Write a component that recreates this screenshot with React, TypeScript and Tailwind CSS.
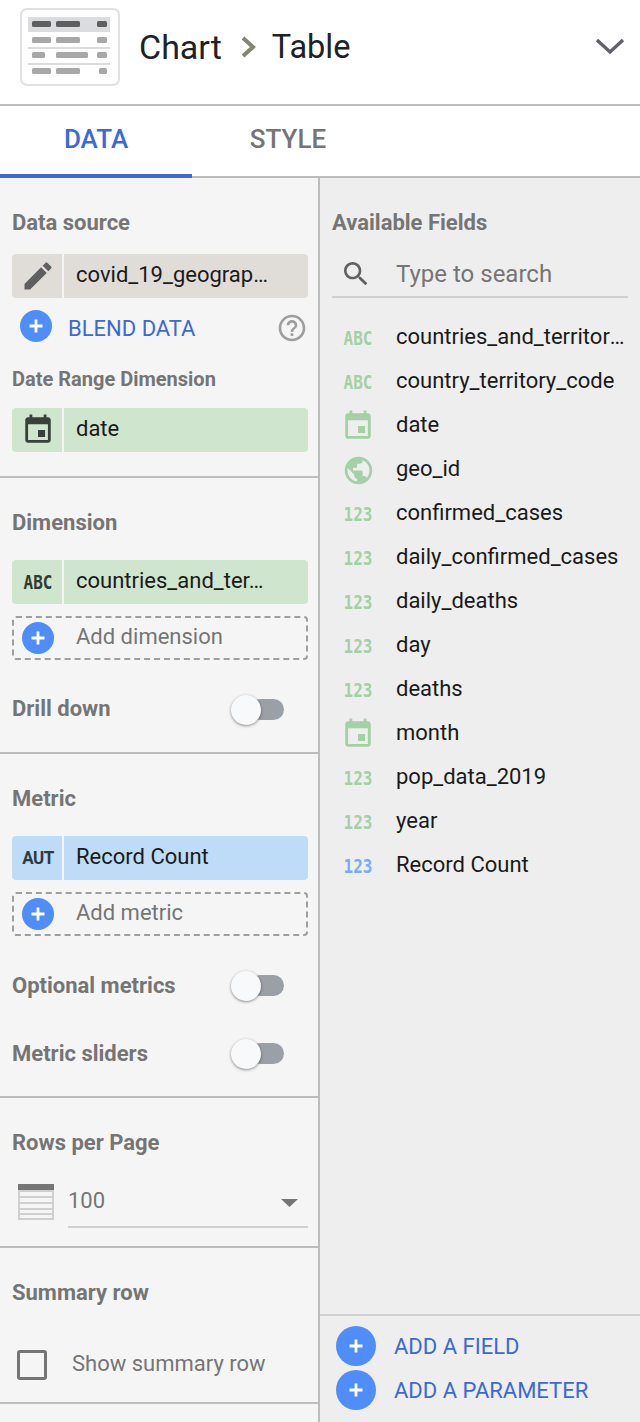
import type { ReactNode } from "react";

const EVENT = "M17 12h-5v5h5v-5zM16 1v2H8V1H6v2H5c-1.11 0-1.99.9-1.99 2L3 19c0 1.1.89 2 2 2h14c1.1 0 2-.9 2-2V5c0-1.1-.9-2-2-2h-1V1h-2zm3 18H5V8h14v11z";
const GLOBE = "M12 2C6.48 2 2 6.48 2 12s4.48 10 10 10 10-4.48 10-10S17.52 2 12 2zm-1 17.93c-3.95-.49-7-3.85-7-7.93 0-.62.08-1.21.21-1.79L9 15v1c0 1.1.9 2 2 2v1.93zm6.9-2.54c-.26-.81-1-1.39-1.9-1.39h-1v-3c0-.55-.45-1-1-1H8v-2h2c.55 0 1-.45 1-1V7h2c1.1 0 2-.9 2-2v-.41c2.93 1.19 5 4.06 5 7.41 0 2.08-.8 3.97-2.1 5.39z";
const EDIT = "M3 17.25V21h3.75L17.81 9.94l-3.75-3.75L3 17.25zM20.71 7.04c.39-.39.39-1.02 0-1.41l-2.34-2.34c-.39-.39-1.02-.39-1.41 0l-1.83 1.83 3.75 3.75 1.83-1.83z";
const HELP = "M11 18h2v-2h-2v2zm1-16C6.48 2 2 6.48 2 12s4.48 10 10 10 10-4.48 10-10S17.52 2 12 2zm0 18c-4.41 0-8-3.59-8-8s3.59-8 8-8 8 3.59 8 8-3.59 8-8 8zm0-14c-2.21 0-4 1.79-4 4h2c0-1.1.9-2 2-2s2 .9 2 2c0 2-3 1.75-3 5h2c0-2.25 3-2.5 3-5 0-2.21-1.79-4-4-4z";
const SEARCH = "M15.5 14h-.79l-.28-.27C15.41 12.59 16 11.11 16 9.5 16 5.91 13.09 3 9.5 3S3 5.91 3 9.5 5.91 16 9.5 16c1.61 0 3.09-.59 4.23-1.57l.27.28v.79l5 4.99L20.49 19l-4.99-5zm-6 0C7.01 14 5 11.99 5 9.5S7.01 5 9.5 5 14 7.01 14 9.5 11.99 14 9.5 14z";

function Mat({ d, size, color }: { d: string; size: number; color: string }) {
  return (
    <svg width={size} height={size} viewBox="0 0 24 24" fill={color}>
      <path d={d} />
    </svg>
  );
}

function Plus({ size }: { size: number }) {
  const arm = 6.5;
  const c = size / 2;
  return (
    <svg width={size} height={size} viewBox={`0 0 ${size} ${size}`} className="shrink-0">
      <circle cx={c} cy={c} r={c} fill="#4f8df9" />
      <path d={`M${c - arm} ${c}H${c + arm}M${c} ${c - arm}V${c + arm}`} stroke="#fff" strokeWidth="2.8" />
    </svg>
  );
}

function Logo() {
  const bar = (x: number, y: number, w: number, fill: string) => (
    <rect x={x} y={y} width={w} height={6} rx={1.5} fill={fill} />
  );
  return (
    <svg width={100} height={78} viewBox="0 0 100 78" className="shrink-0">
      <rect x={1} y={1} width={98} height={76} rx={6} fill="#fff" stroke="#e0e1e4" strokeWidth={2} />
      <rect x={8} y={9} width={82} height={15} fill="#dadce0" />
      {bar(12, 13, 19, "#5f5f5f")}
      {bar(36, 13, 24, "#5f5f5f")}
      {bar(77, 13, 10, "#5f5f5f")}
      {bar(12, 29, 19, "#a8a8a8")}
      {bar(36, 29, 24, "#a8a8a8")}
      {bar(77, 29, 10, "#a8a8a8")}
      <rect x={8} y={39} width={82} height={2} fill="#dadce0" />
      {bar(12, 44, 13, "#a8a8a8")}
      {bar(36, 44, 32, "#a8a8a8")}
      {bar(77, 44, 10, "#a8a8a8")}
      <rect x={8} y={55} width={82} height={2} fill="#dadce0" />
      {bar(12, 60, 19, "#a8a8a8")}
      {bar(36, 60, 24, "#a8a8a8")}
      {bar(79, 60, 8, "#a8a8a8")}
    </svg>
  );
}

function Label({ children, className = "" }: { children: ReactNode; className?: string }) {
  return <div className={`font-bold text-[#757575] ${className}`}>{children}</div>;
}

function Pill({ bg, icon, text }: { bg: string; icon: ReactNode; text: string }) {
  return (
    <div className={`mx-3 h-[44px] w-[296px] flex rounded-[4px] overflow-hidden ${bg}`}>
      <div className="w-[48px] pl-[2px] flex items-center justify-center border-r-2 border-[#f5f5f5] box-content">{icon}</div>
      <div className="flex-1 pl-3 text-[22px] leading-[42px] text-[#1a1a1a] truncate">{text}</div>
    </div>
  );
}

function TypeTag({ text, color }: { text: string; color: string }) {
  return (
    <span
      className="inline-block mt-[2px] font-bold text-[16px] leading-none scale-y-125"
      style={{ color, fontFamily: '"DejaVu Sans Mono", monospace' }}
    >
      {text}
    </span>
  );
}

function AddBox({ text }: { text: string }) {
  return (
    <div className="mx-3 mt-3 h-[44px] w-[296px] flex items-center pl-[8px] rounded-[4px] border-2 border-dashed border-[#9e9e9e]">
      <Plus size={32} />
      <span className="ml-[22px] pb-[4px] text-[22px] text-[#757575]">{text}</span>
    </div>
  );
}

function Toggle() {
  return (
    <div className="relative w-[34px] h-[21px] rounded-full bg-[#9aa0a6] mr-[34px]">
      <div className="absolute left-[-19px] top-[-4px] w-[30px] h-[30px] rounded-full bg-[#f8f9fa] shadow-[0_1px_3px_rgba(0,0,0,0.45)]" />
    </div>
  );
}

function ToggleRow({ label, className = "", labelClass = "" }: { label: string; className?: string; labelClass?: string }) {
  return (
    <div className={`h-[24px] pl-3 flex items-center justify-between ${className}`}>
      <Label className={`text-[22px] leading-[24px] ${labelClass}`}>{label}</Label>
      <Toggle />
    </div>
  );
}

const fields = [
  { name: "countries_and_territories", kind: "abc" },
  { name: "country_territory_code", kind: "abc" },
  { name: "date", kind: "date" },
  { name: "geo_id", kind: "geo" },
  { name: "confirmed_cases", kind: "num" },
  { name: "daily_confirmed_cases", kind: "num" },
  { name: "daily_deaths", kind: "num" },
  { name: "day", kind: "num" },
  { name: "deaths", kind: "num" },
  { name: "month", kind: "date" },
  { name: "pop_data_2019", kind: "num" },
  { name: "year", kind: "num" },
  { name: "Record Count", kind: "metric" },
];

function FieldIcon({ kind }: { kind: string }) {
  const green = "#a5cfa6";
  if (kind === "abc") return <TypeTag text="ABC" color={green} />;
  if (kind === "date") return <Mat d={EVENT} size={34} color={green} />;
  if (kind === "geo") return <Mat d={GLOBE} size={33} color={green} />;
  return <TypeTag text="123" color={kind === "metric" ? "#7baaf7" : green} />;
}

function TableIcon() {
  return (
    <svg width={36} height={36} viewBox="0 0 36 36" className="shrink-0">
      <rect width={36} height={36} fill="#cfcfcf" />
      <rect width={36} height={6} fill="#757575" />
      <rect x={2} y={8} width={32} height={4} fill="#f5f5f5" />
      <rect x={2} y={14} width={32} height={4} fill="#f5f5f5" />
      <rect x={2} y={20} width={32} height={4} fill="#f5f5f5" />
      <rect x={2} y={26} width={32} height={3} fill="#f5f5f5" />
      <rect x={2} y={31} width={32} height={3} fill="#f5f5f5" />
    </svg>
  );
}

export default function App() {
  return (
    <div className="w-[640px] h-[1422px] overflow-hidden flex flex-col bg-white font-['Roboto',sans-serif]">
      <header className="h-[106px] shrink-0 flex items-center pl-5 pr-[15px] border-b-2 border-[#bdbdbd]">
        <div className="flex items-center w-full -mt-[10px]">
          <Logo />
          <span className="ml-[19px] text-[34px] text-[#202124]">Chart</span>
          <svg width={16} height={22} viewBox="0 0 16 22" className="ml-[19px]">
            <path d="M2 2l10 9-10 9" fill="none" stroke="#80866f" strokeWidth="4" />
          </svg>
          <span className="ml-[15px] text-[32.5px] text-[#202124]">Table</span>
          <svg width={30} height={18} viewBox="0 0 30 18" className="ml-auto">
            <path d="M2 2l13 12L28 2" fill="none" stroke="#5f6368" strokeWidth="3.4" />
          </svg>
        </div>
      </header>

      <div className="h-[72px] shrink-0 flex">
        <div className="w-[192px] pb-[2px] flex items-center justify-center border-b-4 border-[#3b69d6] text-[26px] font-medium text-[#3b69d6]">
          DATA
        </div>
        <div className="flex-1 border-b-2 border-[#bdbdbd]">
          <div className="w-[192px] h-full pb-[4px] flex items-center justify-center text-[26px] font-medium text-[#757575]">
            STYLE
          </div>
        </div>
      </div>

      <div className="flex-1 flex min-h-0">
        <aside className="w-[320px] shrink-0 bg-[#f5f5f5] border-r-2 border-[#bdbdbd]">
          <section className="h-[300px] border-b-2 border-[#bdbdbd] pt-[32px]">
            <Label className="pl-3 text-[22px] leading-[26px]">Data source</Label>
            <div className="mt-[18px]">
              <Pill bg="bg-[#e0ddd8]" icon={<Mat d={EDIT} size={36} color="#5f5f5f" />} text="covid_19_geograp…" />
            </div>
            <div className="mt-[12px] pl-5 pr-[10px] flex items-center h-[32px]">
              <Plus size={32} />
              <span className="ml-4 mt-[5px] text-[22px] text-[#3b69d6]">BLEND DATA</span>
              <span className="ml-auto mt-[4px]">
                <Mat d={HELP} size={32} color="#9e9e9e" />
              </span>
            </div>
            <Label className="pl-3 mt-[25px] text-[20px] leading-[24px]">Date Range Dimension</Label>
            <div className="mt-[17px]">
              <Pill bg="bg-[#cfe5cd]" icon={<Mat d={EVENT} size={34} color="#37403a" />} text="date" />
            </div>
          </section>

          <section className="h-[276px] border-b-2 border-[#bdbdbd] pt-[32px]">
            <Label className="pl-3 text-[22px] leading-[26px]">Dimension</Label>
            <div className="mt-[24px]">
              <Pill bg="bg-[#cfe5cd]" icon={<TypeTag text="ABC" color="#2f3a32" />} text="countries_and_ter…" />
            </div>
            <AddBox text="Add dimension" />
            <ToggleRow label="Drill down" className="mt-[37px]" />
          </section>

          <section className="h-[344px] border-b-2 border-[#bdbdbd] pt-[32px]">
            <Label className="pl-3 text-[22px] leading-[26px]">Metric</Label>
            <div className="mt-[24px]">
              <Pill
                bg="bg-[#bedcf7]"
                icon={<span className="inline-block font-bold text-[17px] tracking-[-0.5px] scale-y-110 text-[#2f3a40]">AUT</span>}
                text="Record Count"
              />
            </div>
            <AddBox text="Add metric" />
            <ToggleRow label="Optional metrics" className="mt-[37px]" labelClass="pt-[2px]" />
            <ToggleRow label="Metric sliders" className="mt-[44px]" labelClass="pt-[2px]" />
          </section>

          <section className="h-[150px] border-b-2 border-[#bdbdbd] pt-[32px]">
            <Label className="pl-3 text-[22px] leading-[26px]">Rows per Page</Label>
            <div className="mt-[28px] pl-[18px] pr-[10px] flex items-start">
              <TableIcon />
              <div className="ml-[14px] flex-1 h-[46px] -mt-[2px] pb-[8px] pr-[10px] border-b-2 border-[#cfcfcf] flex items-center justify-between">
                <span className="text-[22px] text-[#757575]">100</span>
                <svg width={17} height={8} viewBox="0 0 17 8" className="mt-[6px]">
                  <path d="M0 0h17L8.5 8z" fill="#757575" />
                </svg>
              </div>
            </div>
          </section>

          <section className="h-[156px] border-b-2 border-[#bdbdbd] pt-[32px]">
            <Label className="pl-3 text-[22px] leading-[26px]">Summary row</Label>
            <div className="mt-[41px] pl-[17px] flex items-center">
              <div className="w-[30px] h-[30px] rounded-[3px] border-[3px] border-[#757575]" />
              <span className="ml-[25px] pb-[2px] text-[22px] text-[#757575]">Show summary row</span>
            </div>
          </section>
        </aside>

        <main className="flex-1 min-w-0 flex flex-col bg-[#eeeeee]">
          <div className="flex-1 min-h-0 pt-[32px]">
            <Label className="pl-3 text-[22px] leading-[26px]">Available Fields</Label>
            <div className="mx-3 mt-[16px] h-[46px] border-b-2 border-[#cfcfcf] flex items-center">
              <span className="ml-[8px]">
                <Mat d={SEARCH} size={32} color="#616161" />
              </span>
              <span className="ml-[24px] text-[24px] text-[#757575]">Type to search</span>
            </div>
            <ul className="mt-[17px]">
              {fields.map((f) => (
                <li key={f.name} className="h-[44px] flex items-center">
                  <div className="w-[76px] pt-[2px] flex items-center justify-center">
                    <FieldIcon kind={f.kind} />
                  </div>
                  <span className="w-[230px] pb-[1px] truncate text-[22px] text-[#1a1a1a]">{f.name}</span>
                </li>
              ))}
            </ul>
          </div>
          <div className="h-[108px] shrink-0 border-t-2 border-[#cfcfcf] pt-[10px] pl-4 flex flex-col gap-[4px]">
            <div className="flex items-center">
              <Plus size={40} />
              <span className="ml-[18px] text-[22px] text-[#3b69d6]">ADD A FIELD</span>
            </div>
            <div className="flex items-center">
              <Plus size={40} />
              <span className="ml-[18px] text-[22px] text-[#3b69d6]">ADD A PARAMETER</span>
            </div>
          </div>
        </main>
      </div>
    </div>
  );
}
